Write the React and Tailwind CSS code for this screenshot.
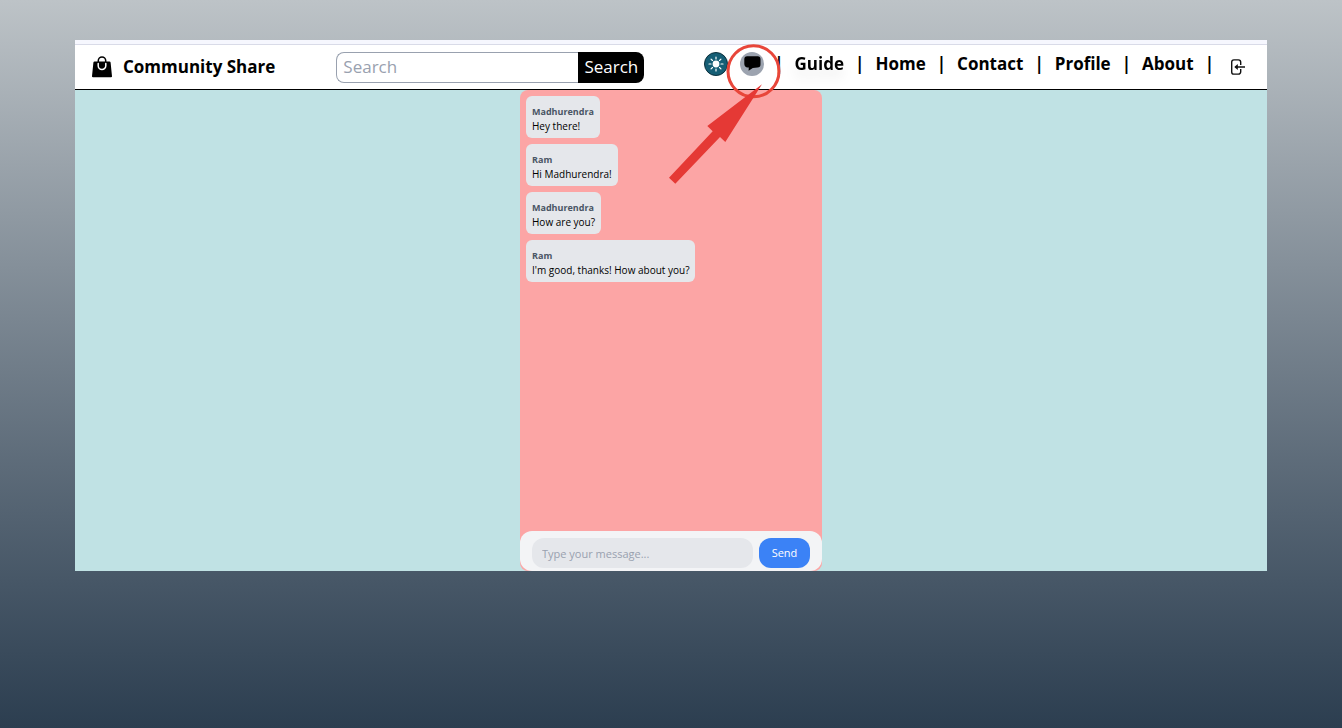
import React from "react";

const messages = [
  { sender: "Madhurendra", text: "Hey there!" },
  { sender: "Ram", text: "Hi Madhurendra!" },
  { sender: "Madhurendra", text: "How are you?" },
  { sender: "Ram", text: "I'm good, thanks! How about you?" },
];

const links = ["Guide", "Home", "Contact", "Profile", "About"];

function BagIcon() {
  return (
    <svg viewBox="0 0 20 22" className="h-[22px] w-5" aria-hidden="true">
      <path d="M6.300 8V4.600a3.700 3.700 0 0 1 7.400 0V8" fill="none" stroke="#000" strokeWidth="1.500" />
      <path d="M2.600 5.500h14.800a1.200 1.200 0 0 1 1.200 1L20 20.200a1 1 0 0 1-1 1.100H1a1 1 0 0 1-1-1.100L1.400 6.500a1.200 1.200 0 0 1 1.200-1z" fill="#000" />
      <path d="M6.200 7.500v2.200a3.800 3.800 0 0 0 7.600 0V7.500" fill="none" stroke="#fff" strokeWidth="1.500" strokeLinecap="round" />
    </svg>
  );
}

function SunIcon() {
  const rays = [0, 45, 90, 135, 180, 225, 270, 315];
  return (
    <svg viewBox="0 0 24 24" className="size-6" aria-hidden="true">
      <circle cx="12" cy="12" r="11.500" fill="#155e75" stroke="#0b2f3b" />
      <circle cx="12" cy="12" r="3.400" fill="#fff" />
      {rays.map((angle) => (
        <path key={angle} d="M12 5v2" stroke="#fff" strokeWidth="1.200" strokeLinecap="round" transform={`rotate(${angle} 12 12)`} />
      ))}
    </svg>
  );
}

function ChatIcon() {
  return (
    <svg viewBox="0 0 24 24" className="size-6" aria-hidden="true">
      <circle cx="12" cy="12" r="12" fill="#9ca3af" />
      <path d="M7.200 4.200h10.600q2.700 0 2.700 3v5q0 3.200-3 3.400l-4.700.3-4.200 2.800.2-3.100H7.600Q4.600 15.300 4.300 12V7.200q0-3 2.900-3z" fill="#000" />
    </svg>
  );
}

function ExitIcon() {
  return (
    <svg viewBox="0 0 14 16" className="h-4 w-3.5" fill="none" stroke="#111" strokeWidth="1.400" aria-hidden="true">
      <path d="M9.700 6V3.200A2.300 2.300 0 0 0 7.400.9H2.900A2.200 2.200 0 0 0 .7 3.100v9.800a2.200 2.200 0 0 0 2.200 2.200h4.500a2.300 2.300 0 0 0 2.300-2.300V10M14 8H4.500" />
      <path d="M6.800 5.100v5.800L3.300 8z" fill="#111" stroke="none" />
    </svg>
  );
}

function Highlight() {
  return (
    <svg viewBox="0 0 124 144" className="pointer-events-none absolute top-0 right-[483px] h-36 w-[124px]" aria-hidden="true">
      <circle cx="93.500" cy="31.300" r="25.500" fill="none" stroke="#e8463a" strokeWidth="3" />
      <path d="M102 44.300 65.300 102 60 97 15.300 143.700 9 137.700 52.700 91.300 47.300 86z" fill="#e53935" />
    </svg>
  );
}

export default function App() {
  return (
    <div className="flex min-h-screen flex-col bg-linear-to-b from-[#bdc3c7] to-[#2c3e50] px-[75px] pt-10 pb-[157px] font-['Open_Sans','Noto_Sans',sans-serif] text-black">
      <div className="relative flex flex-1 flex-col bg-[#c0e2e4]">
        <div className="h-[5px] border-b border-[#d9dbe8] bg-[#f6f7fe]" />
        <header className="flex h-[45px] items-center border-b border-black bg-white pr-[22px] pl-[17px] text-[17px]">
          <a href="#" className="flex items-center gap-[11px] font-bold">
            <BagIcon />
            Community Share
          </a>
          <form className="ml-[61px] flex h-[31px] w-[308px]">
            <input aria-label="Search" placeholder="Search" className="min-w-0 flex-1 rounded-l-lg border border-r-0 border-gray-400 px-1.5 placeholder:text-gray-400" />
            <button type="button" className="w-[66px] rounded-r-lg bg-black text-white">Search</button>
          </form>
          <nav className="ml-auto flex items-center pb-1.5 font-bold">
            <button type="button" aria-label="Toggle theme"><SunIcon /></button>
            <button type="button" aria-label="Open chat" className="mr-2.5 ml-3"><ChatIcon /></button>
            <span>|</span>
            {links.map((name, i) => (
              <React.Fragment key={name}>
                <a href="#" className={i === 0 ? "mx-[11px] drop-shadow-[0_8px_6px_rgba(0,0,0,0.08)]" : "mx-[11px]"}>{name}</a>
                <span>|</span>
              </React.Fragment>
            ))}
            <button type="button" aria-label="Log out" className="ml-[17px] pt-1.5"><ExitIcon /></button>
          </nav>
        </header>
        <main className="mx-auto flex w-[302px] flex-1 flex-col rounded-lg bg-[#fca5a5]">
          <ul className="flex flex-1 flex-col items-start gap-1.5 p-1.5">
            {messages.map((m) => (
              <li key={m.text} className="rounded-md bg-gray-200 px-1.5 pt-[9px] pb-[5px]">
                <p className="text-[9px] leading-[14px] font-bold text-gray-600">{m.sender}</p>
                <p className="text-[10px] leading-[14px]">{m.text}</p>
              </li>
            ))}
          </ul>
          <form className="flex gap-1.5 rounded-xl bg-gray-100 px-3 pt-[7px] pb-[3px] text-[11px]">
            <input aria-label="Message" placeholder="Type your message..." className="h-[30px] min-w-0 flex-1 rounded-xl bg-gray-200 px-2.5 placeholder:text-gray-400" />
            <button type="button" className="h-[30px] w-[51px] rounded-xl bg-[#3b82f6] text-white">Send</button>
          </form>
        </main>
        <Highlight />
      </div>
    </div>
  );
}
